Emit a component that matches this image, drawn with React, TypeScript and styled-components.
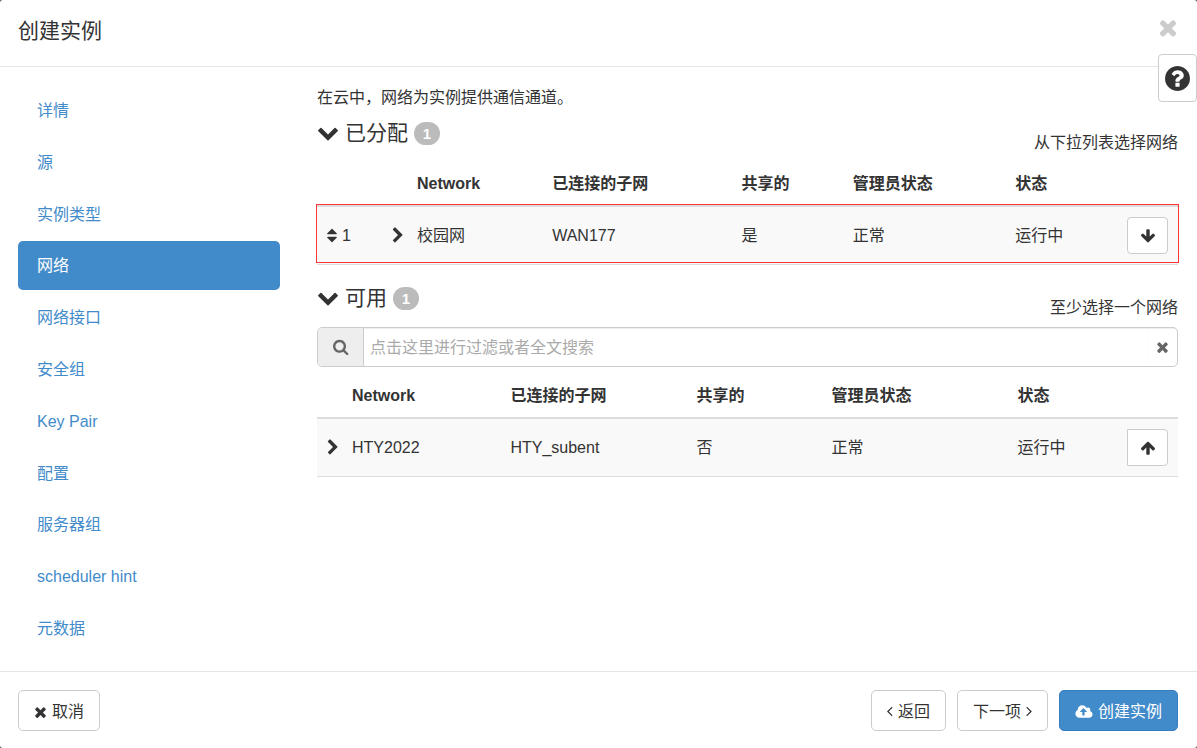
import React from 'react';
import styled, { createGlobalStyle, css } from 'styled-components';

const GlobalStyle = createGlobalStyle`
  *, *::before, *::after { box-sizing: border-box; }
  body {
    margin: 0;
    background: #5a5a5a;
    color: #333;
    font: 16px/23px "Liberation Sans", "Noto Sans CJK SC", sans-serif;
  }
  button, input { font: inherit; color: inherit; }
  button { cursor: pointer; }
`;

/* ---------- icons ---------- */

const glyphs = {
  times: {
    box: '192 0 1408 1792',
    d: 'M1490 1322q0 40-28 68l-136 136q-28 28-68 28t-68-28l-294-294-294 294q-28 28-68 28t-68-28l-136-136q-28-28-28-68t28-68l294-294-294-294q-28-28-28-68t28-68l136-136q28-28 68-28t68 28l294 294 294-294q28-28 68-28t68 28l136 136q28 28 28 68t-28 68l-294 294 294 294q28 28 28 68z',
  },
  chevronRight: {
    box: '256 0 1280 1792',
    d: 'M1363 877l-742 742q-19 19-45 19t-45-19l-166-166q-19-19-19-45t19-45l531-531-531-531q-19-19-19-45t19-45l166-166q19-19 45-19t45 19l742 742q19 19 19 45t-19 45z',
  },
  chevronDown: {
    box: '0 64 1792 1792',
    d: 'M1683 808l-742 741q-19 19-45 19t-45-19l-742-741q-19-19-19-45.500t19-45.500l166-165q19-19 45-19t45 19l531 531 531-531q19-19 45-19t45 19l166 165q19 19 19 45.500t-19 45.500z',
  },
  search: {
    box: '64 64 1728 1792',
    d: 'M1216 832q0-185-131.500-316.500t-316.500-131.500-316.500 131.500-131.500 316.500 131.500 316.500 316.500 131.500 316.500-131.500 131.500-316.500zm512 832q0 52-38 90t-90 38q-54 0-90-38l-343-342q-179 124-399 124-143 0-273.500-55.500t-225-150-150-225-55.500-273.500 55.500-273.500 150-225 225-150 273.500-55.500 273.500 55.500 225 150 150 225 55.500 273.500q0 220-124 399l343 343q37 37 37 90z',
  },
  question: {
    box: '128 128 1536 1536',
    d: 'M1024 1376v-192q0-14-9-23t-23-9h-192q-14 0-23 9t-9 23v192q0 14 9 23t23 9h192q14 0 23-9t9-23zm256-672q0-88-55.500-163t-138.500-116-170-41q-243 0-371 213-15 24 8 42l132 100q7 6 19 6 16 0 25-12 53-68 86-92 34-24 86-24 48 0 85.500 26t37.500 59q0 38-20 61t-68 45q-63 28-115.500 86.500t-52.500 125.500v36q0 14 9 23t23 9h192q14 0 23-9t9-23q0-19 21.500-49.500t54.500-49.500q32-18 49-28.500t46-35 44.500-48 28-60.500 12.500-81zm384 192q0 209-103 385.500t-279.500 279.500-385.500 103-385.500-103-279.500-279.500-103-385.500 103-385.500 279.500-279.500 385.500-103 385.500 103 279.500 279.500 103 385.500z',
  },
  sort: {
    box: '384 0 1024 1792',
    d: 'M1408 1088q0 26-19 45l-448 448q-19 19-45 19t-45-19l-448-448q-19-19-19-45t19-45 45-19h896q26 0 45 19t19 45zm0-384q0 26-19 45t-45 19h-896q-26 0-45-19t-19-45 19-45l448-448q19-19 45-19t45 19l448 448q19 19 19 45z',
  },
  arrowDown: {
    box: '0 0 1792 1792',
    d: 'M1675 832q0 53-37 90l-651 652q-39 37-91 37-53 0-90-37l-651-652q-38-36-38-90 0-53 38-91l74-75q39-37 91-37 53 0 90 37l294 294v-704q0-52 38-90t90-38h128q52 0 90 38t38 90v704l294-294q37-37 90-37 52 0 91 37l75 75q37 39 37 91z',
  },
  arrowUp: {
    box: '0 0 1792 1792',
    d: 'M1675 971q0 51-37 90l-75 75q-38 38-91 38-54 0-90-38l-294-293v704q0 52-37.500 84.500t-90.500 32.500h-128q-53 0-90.500-32.500t-37.500-84.500v-704l-294 293q-36 38-90 38t-90-38l-75-75q-38-38-38-90 0-53 38-91l651-651q35-37 90-37 54 0 91 37l651 651q37 39 37 91z',
  },
  angleLeft: {
    box: '608 64 640 1792',
    d: 'M1203 544q0 13-10 23l-393 393 393 393q10 10 10 23t-10 23l-50 50q-10 10-23 10t-23-10l-466-466q-10-10-10-23t10-23l466-466q10-10 23-10t23 10l50 50q10 10 10 23z',
  },
  angleRight: {
    box: '560 64 640 1792',
    d: 'M1171 960q0 13-10 23l-466 466q-10 10-23 10t-23-10l-50-50q-10-10-10-23t10-23l393-393-393-393q-10-10-10-23t10-23l50-50q10-10 23-10t23 10l466 466q10 10 10 23z',
  },
  cloudUpload: {
    box: '-64 0 1920 1792',
    d: 'M1216 864q0-14-9-23l-352-352q-9-9-23-9t-23 9l-351 351q-10 12-10 24 0 14 9 23t23 9h224v352q0 13 9.500 22.500t22.500 9.500h192q13 0 22.500-9.500t9.500-22.500v-352h224q13 0 22.500-9.500t9.500-22.500zm640 288q0 159-112.500 271.500t-271.500 112.500h-1088q-185 0-316.500-131.500t-131.500-316.500q0-130 70-240t188-165q-2-30-2-43 0-212 150-362t362-150q156 0 285.500 87t188.500 231q71-62 166-62 106 0 181 75t75 181q0 76-41 138 130 31 213.500 135.500t83.500 238.500z',
  },
};

const Svg = styled.svg`
  display: block;
  flex: none;
  fill: currentColor;
`;

function Icon({ name, w, h = 16 }: { name: keyof typeof glyphs; w: number; h?: number }) {
  return (
    <Svg viewBox={glyphs[name].box} width={w} height={h} aria-hidden="true">
      <path d={glyphs[name].d} />
    </Svg>
  );
}

/* ---------- dialog frame ---------- */

const Dialog = styled.div`
  position: relative;
  display: flex;
  flex-direction: column;
  min-height: 100vh;
  background: #fff;
  border-radius: 3px;
`;

const Header = styled.header`
  display: flex;
  justify-content: space-between;
  align-items: flex-start;
  padding: 15px 19px 19px 18px;
  border-bottom: 1px solid #e5e5e5;
`;

const Title = styled.h1`
  margin: 0;
  font-size: 21px;
  line-height: 32px;
  font-weight: 400;
`;

const PlainButton = styled.button`
  display: flex;
  padding: 0;
  border: 0;
  background: none;
`;

const CloseButton = styled(PlainButton)`
  color: #ccc;
`;

const HelpButton = styled.button`
  position: absolute;
  top: 54px;
  right: 0;
  display: flex;
  align-items: center;
  justify-content: center;
  width: 39px;
  height: 48px;
  padding: 0;
  border: 1px solid #ccc;
  border-radius: 4px;
  background: #fff;
`;

const Body = styled.div`
  flex: 1;
  display: flex;
  gap: 37px;
  padding: 19px 19px 18px 18px;
`;

const Footer = styled.footer`
  display: flex;
  justify-content: space-between;
  padding: 18px 19px 17px 18px;
  border-top: 1px solid #e5e5e5;
`;

const ButtonGroup = styled.div`
  display: flex;
  gap: 11px;
`;

const Button = styled.button<{ $primary?: boolean }>`
  display: flex;
  align-items: center;
  gap: 5px;
  height: 41px;
  padding: 2px 15px 0;
  border: 1px solid #ccc;
  border-radius: 5px;
  background: #fff;
  white-space: nowrap;
  ${(p) =>
    p.$primary &&
    css`
      border-color: #357ebd;
      background: #428bca;
      color: #fff;
    `}
`;

/* ---------- step navigation ---------- */

const Steps = styled.nav`
  display: flex;
  flex-direction: column;
  justify-content: space-between;
  flex: none;
  width: 262px;
`;

const Step = styled.a<{ $active?: boolean }>`
  padding: 13px 19px;
  border-radius: 5px;
  text-decoration: none;
  color: ${(p) => (p.$active ? '#fff' : '#428bca')};
  background: ${(p) => (p.$active ? '#428bca' : 'transparent')};
`;

/* ---------- transfer tables ---------- */

const Content = styled.main`
  flex: 1;
  min-width: 0;
`;

const Intro = styled.p`
  margin: 0 0 12px;
`;

const Section = styled.section`
  & + & { margin-top: 21px; }
`;

const SectionHead = styled.div`
  display: flex;
  justify-content: space-between;
  height: 33px;
  margin-bottom: 8px;
`;

const SectionToggle = styled(PlainButton)`
  align-items: center;
  gap: 6px;
  height: 24px;
`;

const SectionTitle = styled.span`
  font-size: 21px;
  line-height: 24px;
`;

const Badge = styled.span`
  min-width: 26px;
  padding: 0 8px;
  border-radius: 12px;
  background: #bbb;
  color: #fff;
  font-size: 15px;
  font-weight: 700;
`;

const Hint = styled.span`
  align-self: flex-end;
`;

const Table = styled.table`
  width: 100%;
  table-layout: fixed;
  border-collapse: separate;
  border-spacing: 0;
`;

const Col = styled.col<{ $w?: string }>`
  width: ${(p) => p.$w ?? 'auto'};
`;

const Th = styled.th`
  padding: 10px;
  border-bottom: 2px solid #ddd;
  text-align: left;
  font-weight: 700;
  white-space: nowrap;
`;

const Td = styled.td`
  padding: 10px;
  border-bottom: 1px solid #ddd;
  white-space: nowrap;
  vertical-align: middle;
`;

const Row = styled.tr<{ $marked?: boolean }>`
  background: #f9f9f9;
  ${(p) =>
    p.$marked &&
    css`
      position: relative;
      ${Td}:first-child::after {
        content: '';
        position: absolute;
        inset: -3px -1px 2px;
        border: 1px solid #f33;
        pointer-events: none;
      }
    `}
`;

const Order = styled.span`
  display: flex;
  align-items: center;
  gap: 5px;
`;

const MoveButton = styled.button<{ $joined?: boolean }>`
  display: flex;
  align-items: center;
  justify-content: center;
  width: 41px;
  height: 37px;
  padding: 0;
  border: 1px solid #ccc;
  border-radius: ${(p) => (p.$joined ? '0 4px 4px 0' : '4px')};
  background: #fff;
`;

const SearchBox = styled.div`
  display: flex;
  height: 40px;
  margin-bottom: 7px;
  border: 1px solid #ccc;
  border-radius: 5px;
  overflow: hidden;
  color: #666;
`;

const SearchLabel = styled.label`
  display: flex;
  align-items: center;
  justify-content: center;
  width: 46px;
  border-right: 1px solid #ccc;
  background: #eee;
`;

const SearchInput = styled.input`
  flex: 1;
  min-width: 0;
  padding: 0 6px;
  border: 0;
  outline: 0;
  background: #fff;
  box-shadow: inset 0 1px 1px rgba(0, 0, 0, 0.075);
  &::placeholder { color: #aaa; opacity: 1; }
`;

const ClearButton = styled(PlainButton)`
  align-items: center;
  padding: 0 8px;
  box-shadow: inset 0 1px 1px rgba(0, 0, 0, 0.075);
`;

const steps = ['详情', '源', '实例类型', '网络', '网络接口', '安全组', 'Key Pair', '配置', '服务器组', 'scheduler hint', '元数据'];
const headings = ['Network', '已连接的子网', '共享的', '管理员状态', '状态'];

const allocatedCols = ['65px', '25px', '15.7%', '22%', '12.9%', '18.9%', undefined, '61px'];
const availableCols = ['25px', '18.4%', '21.6%', '15.7%', '21.6%', undefined, '61px'];

interface NetworkTableProps {
  cols: (string | undefined)[];
  values: string[];
  order?: number;
}

function NetworkTable({ cols, values, order }: NetworkTableProps) {
  const allocated = order !== undefined;
  return (
    <Table>
      <colgroup>
        {cols.map((w, i) => (
          <Col key={i} $w={w} />
        ))}
      </colgroup>
      <thead>
        <tr>
          {allocated && <Th />}
          <Th />
          {headings.map((h) => (
            <Th key={h} scope="col">{h}</Th>
          ))}
          <Th />
        </tr>
      </thead>
      <tbody>
        <Row $marked={allocated}>
          {allocated && (
            <Td>
              <Order>
                <Icon name="sort" w={10} h={17} />
                {order}
              </Order>
            </Td>
          )}
          <Td>
            <PlainButton type="button" aria-label="展开">
              <Icon name="chevronRight" w={12} h={17} />
            </PlainButton>
          </Td>
          {values.map((v) => (
            <Td key={v}>{v}</Td>
          ))}
          <Td>
            <MoveButton type="button" $joined={!allocated} aria-label={allocated ? '移除' : '分配'}>
              <Icon name={allocated ? 'arrowDown' : 'arrowUp'} w={16} />
            </MoveButton>
          </Td>
        </Row>
      </tbody>
    </Table>
  );
}

function SectionHeading({ title, hint }: { title: string; hint: string }) {
  return (
    <SectionHead>
      <SectionToggle type="button">
        <Icon name="chevronDown" w={22} h={22} />
        <SectionTitle>{title}</SectionTitle>
        <Badge>1</Badge>
      </SectionToggle>
      <Hint>{hint}</Hint>
    </SectionHead>
  );
}

export default function App() {
  return (
    <>
      <GlobalStyle />
      <Dialog role="dialog" aria-labelledby="dialog-title">
        <Header>
          <Title id="dialog-title">创建实例</Title>
          <CloseButton type="button" aria-label="关闭">
            <Icon name="times" w={20} h={25} />
          </CloseButton>
        </Header>
        <HelpButton type="button" aria-label="帮助">
          <Icon name="question" w={25} h={25} />
        </HelpButton>
        <Body>
          <Steps>
            {steps.map((s) => (
              <Step key={s} href="#" $active={s === '网络'}>{s}</Step>
            ))}
          </Steps>
          <Content>
            <Intro>在云中，网络为实例提供通信通道。</Intro>
            <Section>
              <SectionHeading title="已分配" hint="从下拉列表选择网络" />
              <NetworkTable cols={allocatedCols} order={1} values={['校园网', 'WAN177', '是', '正常', '运行中']} />
            </Section>
            <Section>
              <SectionHeading title="可用" hint="至少选择一个网络" />
              <SearchBox>
                <SearchLabel htmlFor="network-filter" aria-label="搜索">
                  <Icon name="search" w={16} h={17} />
                </SearchLabel>
                <SearchInput id="network-filter" type="text" placeholder="点击这里进行过滤或者全文搜索" />
                <ClearButton type="button" aria-label="清除">
                  <Icon name="times" w={13} />
                </ClearButton>
              </SearchBox>
              <NetworkTable cols={availableCols} values={['HTY2022', 'HTY_subent', '否', '正常', '运行中']} />
            </Section>
          </Content>
        </Body>
        <Footer>
          <Button type="button">
            <Icon name="times" w={13} />
            取消
          </Button>
          <ButtonGroup>
            <Button type="button">
              <Icon name="angleLeft" w={6} h={17} />
              返回
            </Button>
            <Button type="button">
              下一项
              <Icon name="angleRight" w={6} h={17} />
            </Button>
            <Button type="button" $primary>
              <Icon name="cloudUpload" w={18} />
              创建实例
            </Button>
          </ButtonGroup>
        </Footer>
      </Dialog>
    </>
  );
}
